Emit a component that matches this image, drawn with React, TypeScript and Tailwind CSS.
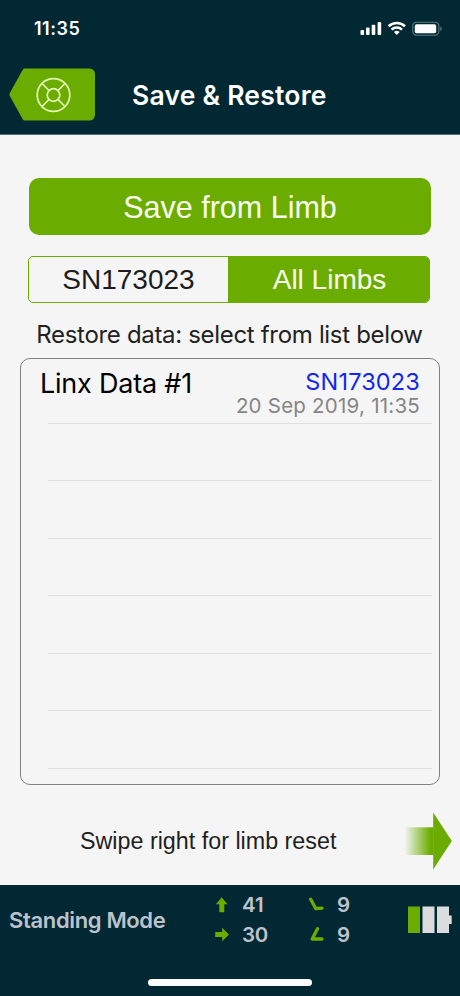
import React from "react";

const inter = "font-['Inter','Liberation_Sans',sans-serif]";
const helv = "font-['Liberation_Sans',Arial,sans-serif]";

function StatusIcons() {
  return (
    <svg width="84" height="16" viewBox="0 0 84 16" className="block">
      <g fill="#fff">
        <rect x="0.5" y="9" width="3.6" height="5" rx="1" />
        <rect x="6" y="6.5" width="3.6" height="7.5" rx="1" />
        <rect x="11.7" y="3.8" width="3.6" height="10.2" rx="1" />
        <rect x="17.6" y="1" width="3.6" height="13" rx="1" />
      </g>
      <g fill="none" stroke="#fff" strokeWidth="2.6">
        <path d="M28.6 5.3a12 12 0 0 1 16.4 0" />
        <path d="M31.6 8.6a7.6 7.6 0 0 1 10.4 0" />
      </g>
      <path d="M33.9 11.1a4.3 4.3 0 0 1 5.8 0l-2.9 2.9z" fill="#fff" />
      <rect x="52.8" y="1.2" width="26" height="13" rx="3.6" fill="none" stroke="#5f7a80" strokeWidth="1.1" />
      <rect x="54.8" y="3.2" width="21.4" height="9" rx="1.8" fill="#fff" />
      <path d="M80.3 5.4c2 .9 2 3.7 0 4.6z" fill="#5f7a80" />
    </svg>
  );
}

function BackButton() {
  return (
    <button className="block">
      <svg width="88" height="54" viewBox="0 0 88 54" className="block">
        <path d="M16 1H80.500a5.500 5.500 0 0 1 5.500 5.500V47.500a5.500 5.500 0 0 1-5.500 5.500H16Q14.500 53 13.700 51.700L.7 28.200Q0 27 .7 25.800L13.700 2.300Q14.500 1 16 1Z" transform="translate(0 -.5)" fill="#6bac00" />
        <g fill="none" stroke="#e6f7b8" strokeWidth="1.700">
          <circle cx="44.500" cy="27" r="16.300" />
          <circle cx="44.500" cy="27" r="6.300" />
          <path d="M33 15.500l7 7M56 15.500l-7 7M33 38.500l7-7M56 38.500l-7-7" />
        </g>
      </svg>
    </button>
  );
}

function SwipeArrow() {
  return (
    <svg width="48" height="58" viewBox="0 0 48 58" className="block">
      <defs>
        <linearGradient id="fade" x1="0" x2="1" y1="0" y2="0">
          <stop offset="0" stopColor="#6bac00" stopOpacity="0" />
          <stop offset="0.9" stopColor="#6bac00" />
        </linearGradient>
      </defs>
      <rect x="0.500" y="15.300" width="29" height="27.700" fill="url(#fade)" />
      <path d="M29.200 0.500L47.800 29L29.200 57.500Z" fill="#6bac00" />
    </svg>
  );
}

function UpArrow() {
  return (
    <svg width="16" height="16" viewBox="0 0 16 16" className="block">
      <path d="M7.700 .2L13.500 7.200H10.300V15.300H5.300V7.200H1.900Z" fill="#6bac00" />
    </svg>
  );
}

function RightArrow() {
  return (
    <svg width="16" height="16" viewBox="0 0 16 16" className="block">
      <path d="M15 7.500L8.200 .8V5.100H1.200V9.900H8.200V14.200Z" fill="#6bac00" />
    </svg>
  );
}

function Angle({ d }: { d: string }) {
  return (
    <svg width="18" height="16" viewBox="0 0 18 16" className="block">
      <path d={d} fill="none" stroke="#6bac00" strokeWidth="3.300" strokeLinecap="round" strokeLinejoin="round" />
    </svg>
  );
}

function BatteryLevel() {
  return (
    <svg width="44" height="28" viewBox="0 0 44 28" className="block">
      <rect x="0" y="0.500" width="12" height="26.500" fill="#6bac00" />
      <rect x="14.500" y="0.500" width="12" height="26.500" fill="#dcdcde" />
      <path d="M29 .5H41V9.500H43.700V18H41V27H29Z" fill="#dcdcde" />
    </svg>
  );
}

export default function App() {
  return (
    <div className={`flex h-[996px] w-[460px] flex-col overflow-hidden bg-[#f5f5f5] whitespace-nowrap ${inter}`}>
      <header className="flex h-[135px] flex-col border-b border-[#52707a] bg-[#022833] text-white">
        <div className="flex h-[57px] items-center justify-between pr-[16px] pl-[34px]">
          <span className="pt-[1px] text-[18px] leading-none font-semibold tracking-[0.500px]">11:35</span>
          <StatusIcons />
        </div>
        <div className="flex h-[76px] items-center pl-[9px]">
          <BackButton />
          <h1 className="ml-[35px] text-[26.500px] leading-none font-semibold tracking-[0.220px]">Save &amp; Restore</h1>
        </div>
      </header>

      <main className="flex h-[750px] flex-col">
        <button className={`mt-[43px] ml-[29px] flex h-[57px] w-[402px] items-center justify-center rounded-[10px] bg-[#6bac00] pt-[1px] text-[30.500px] leading-none text-[#fbfff0] ${helv}`}>
          Save from Limb
        </button>
        <div className={`mt-[21px] ml-[28px] flex h-[47px] w-[402px] overflow-hidden rounded-[5px] border border-[#6bac00] text-[28px] leading-none ${helv}`}>
          <button className="flex w-[199px] items-center justify-center text-[#1c1c1e]">SN173023</button>
          <button className="flex flex-1 items-center justify-center bg-[#6bac00] pl-[2px] text-[#fbfff0]">All Limbs</button>
        </div>
        <p className="mt-[20px] h-[24px] pr-[1px] text-center text-[24px] leading-[24px] tracking-[-0.320px] text-[#222]">
          Restore data: select from list below
        </p>
        <section className="mt-[11px] ml-[20px] h-[427px] w-[420px] rounded-[10px] border-[1.500px] border-[#808080]">
          <div className="flex h-[64px] justify-between pr-[19px] pl-[19px]">
            <span className="mt-[11px] text-[27px] leading-[28px] tracking-[-0.220px] text-black">Linx Data #1</span>
            <div className="mt-[11px] flex flex-col items-end">
              <span className="text-[23.500px] leading-[24px] tracking-[0.150px] text-[#1428ec]">SN173023</span>
              <span className="text-[20.500px] leading-[23px] tracking-[0.230px] text-[#858585]">20 Sep 2019, 11:35</span>
            </div>
          </div>
          <div className="ml-[27px] w-[384px]">
            {[0, 1, 2, 3, 4, 5].map((row) => (
              <div key={row} className="h-[57.450px] border-t border-[#dfe0e1]" />
            ))}
            <div className="border-t border-[#dfe0e1]" />
          </div>
        </section>
        <div className="mt-[27px] flex h-[58px] items-center justify-between pr-[8px] pl-[80px]">
          <span className={`pt-[2px] text-[23.300px] leading-none text-[#1f1f1f] ${helv}`}>Swipe right for limb reset</span>
          <SwipeArrow />
        </div>
      </main>

      <footer className="flex h-[111px] flex-col items-center bg-[#022833] text-[#bcc3cd]">
        <div className="flex h-[70px] w-full items-center pl-[9px]">
          <span className="w-[205px] text-[22px] leading-none font-semibold tracking-[-0.350px]">Standing Mode</span>
          <div className="grid grid-cols-[28px_66px_29px_71px] grid-rows-[30px_30px] items-center text-[20.500px] leading-none font-semibold">
            <UpArrow />
            <span>41</span>
            <Angle d="M2.700 2.200L7.700 11.500L14 11.200" />
            <span>9</span>
            <RightArrow />
            <span className="tracking-[-0.300px]">30</span>
            <Angle d="M9.500 1.800L4.200 12H14" />
            <span>9</span>
          </div>
          <BatteryLevel />
        </div>
        <div className="mt-[24px] h-[7px] w-[164px] rounded-full bg-white" />
      </footer>
    </div>
  );
}
